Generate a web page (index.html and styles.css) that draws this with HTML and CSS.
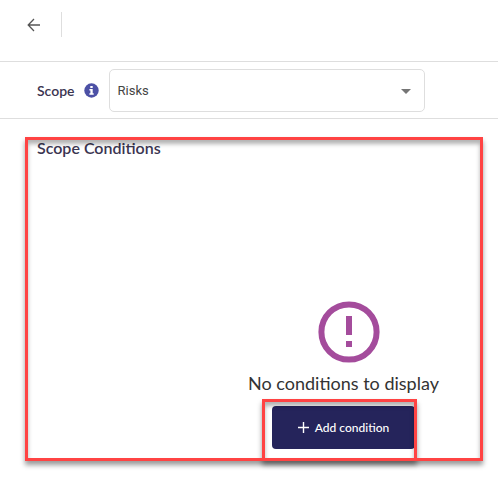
FILE: index.html
```html
<!DOCTYPE html>
<html lang="en">
<head>
<meta charset="utf-8">
<title>Scope</title>
<link rel="stylesheet" href="styles.css">
</head>
<body>
<header class="topbar">
  <button class="back" type="button" aria-label="Back">
    <svg width="14" height="14" viewBox="0 0 14 14" fill="none" stroke="currentColor" stroke-width="1.3"><path d="M13 7H1.5M7 1L1.2 7L7 13"/></svg>
  </button>
  <span class="divider"></span>
</header>
<main class="content">
  <div class="scope-row">
    <label class="scope-label" for="scope">Scope</label>
    <svg class="info" width="15" height="15" viewBox="0 0 15 15"><circle cx="7.5" cy="7.5" r="7.2" fill="#4c50a5"/><path fill="#fff" d="M6.3 3h2.4v2H6.3zM5.4 6h3.3v4.2h1V11.8H5.4v-1.6h1V7.6h-1z"/></svg>
    <div class="select-wrap">
      <select id="scope" class="select"><option>Risks</option></select>
      <svg class="caret" width="10" height="5" viewBox="0 0 10 5"><path fill="#757575" d="M0 0h10L5 5z"/></svg>
    </div>
  </div>
  <section class="conditions highlight">
    <h2 class="title">Scope Conditions</h2>
    <div class="empty">
      <svg class="alert" width="62" height="62" viewBox="0 0 62 62"><circle cx="31" cy="31" r="27.6" fill="none" stroke="#a44c9c" stroke-width="6"/><path fill="#a44c9c" d="M28 15h6v19h-6zM28 40h6v6h-6z"/></svg>
      <p class="message">No conditions to display</p>
      <div class="action highlight">
        <button class="add" type="button">
          <svg width="11" height="11" viewBox="0 0 11 11" stroke="currentColor" stroke-width="1.4"><path d="M5.500 0v11M0 5.500h11"/></svg>
          Add condition
        </button>
      </div>
    </div>
  </section>
</main>
</body>
</html>
```

FILE: styles.css
```css
* {
  box-sizing: border-box;
}

body {
  margin: 0;
  background: #fff;
  color: #333;
  font-family: Lato, "Liberation Sans", sans-serif;
}

.topbar {
  display: flex;
  align-items: center;
  gap: 20px;
  padding: 12px 27px 24px;
  border-bottom: 1px solid #dedede;
}

.back {
  display: flex;
  padding: 0;
  border: 0;
  background: none;
  color: #555;
}

.divider {
  height: 25px;
  border-left: 1px solid #dedede;
}

.content {
  padding-bottom: 23px;
}

.scope-row {
  display: flex;
  align-items: center;
  padding: 7px 37px 6px;
  border-bottom: 1px solid #dedede;
}

.scope-label {
  color: #3b3551;
  font-size: 14px;
  font-weight: 600;
}

.info {
  margin: 0 10px 0 9px;
}

.select-wrap {
  position: relative;
  flex: 0 1 316px;
}

.select {
  display: block;
  width: 100%;
  height: 43px;
  padding: 0 8px;
  border: 1px solid #dedede;
  border-radius: 5px;
  background: #fff;
  color: #444;
  font: 13px Roboto, sans-serif;
  appearance: none;
}

.caret {
  position: absolute;
  top: 20px;
  right: 14px;
  pointer-events: none;
}

.highlight {
  position: relative;
}

.highlight::after {
  content: "";
  position: absolute;
  inset: 0;
  border: 3px solid #ff4343;
  box-shadow: 0 4px 5px rgba(0, 0, 0, 0.4), inset 0 4px 4px rgba(0, 0, 0, 0.3);
  pointer-events: none;
}

.conditions {
  margin: 18px 15px 0 25px;
  padding: 0 0 12px 12px;
}

.title {
  margin: 0;
  color: #3b3551;
  font-size: 16px;
  font-weight: 600;
  line-height: 22px;
}

.empty {
  display: flex;
  flex-direction: column;
  align-items: center;
  padding: 142px 0 0 167px;
}

.alert {
  margin-left: 10px;
}

.message {
  margin: 8px 0 10px;
  font-size: 18px;
  line-height: 25px;
}

.action::after {
  inset: -7px -2px -12px -10px;
}

.add {
  display: flex;
  align-items: center;
  justify-content: center;
  gap: 6px;
  width: 143px;
  height: 43px;
  padding: 0;
  border: 0;
  border-radius: 4px;
  background: #25245b;
  color: #fff;
  font: 500 12px Lato, sans-serif;
}
```
